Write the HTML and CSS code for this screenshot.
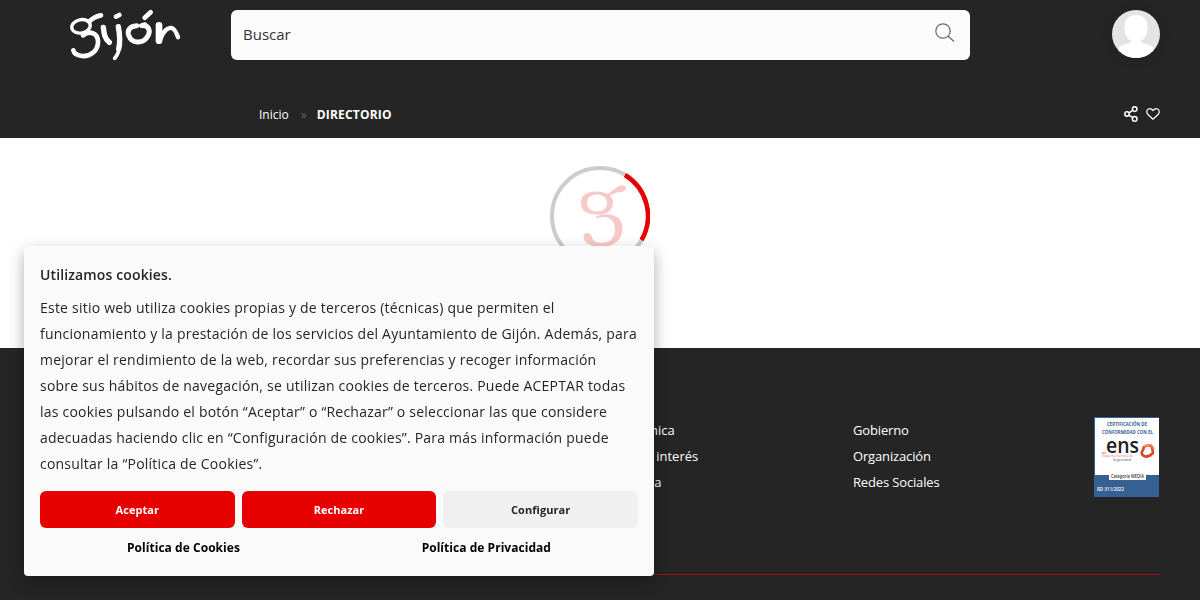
FILE: index.html
```html
<!DOCTYPE html>
<html lang="es">
<head>
<meta charset="utf-8">
<title>Directorio - Gijón</title>
<link rel="stylesheet" href="styles.css">
</head>
<body>
<header class="header">
  <div class="topbar">
    <a class="logo" href="#" aria-label="Gijón">
      <svg width="130" height="70" viewBox="0 0 390 210" fill="none" stroke="#fff" stroke-linecap="round" stroke-linejoin="round">
        <ellipse cx="63" cy="79" rx="28" ry="20" stroke-width="10" transform="rotate(-12 63 79)"/>
        <path d="M88 64Q104 49 123 46" stroke-width="14"/>
        <path d="M69 106C88 91 113 98 114 124C115 152 91 170 65 168C48 166 42 160 40 151" stroke-width="14"/>
        <path d="M130 82C132 101 134 116 148 127" stroke-width="16"/>
        <path d="M168 50L178 45" stroke-width="14"/>
        <path d="M176 78C183 118 182 155 164 175" stroke-width="11"/>
        <path d="M175 80C181 112 179 135 176 147" stroke-width="16"/>
        <path d="M230 77C208 78 200 93 207 108C215 131 248 131 261 112C274 94 267 75 246 77" stroke-width="15"/>
        <path d="M242 76Q252 69 257 71L237 77" stroke-width="8"/>
        <path d="M254 53L272 37" stroke-width="14"/>
        <path d="M297 76L297 122" stroke-width="20"/>
        <path d="M301 118C310 92 324 82 335 84C346 87 350 101 354 112" stroke-width="13"/>
      </svg>
    </a>
    <form class="search">
      <span>Buscar</span>
      <svg width="20" height="20" viewBox="0 0 20 20" fill="none" stroke="#666" stroke-width="1.2"><circle cx="8" cy="8" r="7.2"/><path d="M13.2 13.2L19 18.5"/></svg>
    </form>
    <svg class="avatar" width="48" height="48" viewBox="0 0 48 48">
      <path d="M24 5C16 5 12 11 12.5 18C13 25 15 29 19 31C19 33 17 33.5 14 33.5C9 35 6 38 4 42V48H44V42C42 38 39 35 34 33.5C31 33.5 29 33 29 31C33 29 35 25 35.5 18C36 11 32 5 24 5Z" fill="#fff"/>
    </svg>
  </div>
  <div class="crumbbar">
    <nav class="crumbs"><a href="#">Inicio</a><span class="sep">»</span><strong>DIRECTORIO</strong></nav>
    <div class="actions">
      <svg width="14" height="16" viewBox="0 0 14 16" fill="none" stroke="#fff" stroke-width="1.5"><circle cx="3" cy="8" r="2.2"/><circle cx="10.7" cy="3.1" r="2.3"/><circle cx="10.7" cy="12.9" r="2.3"/><path d="M5 6.8L8.7 4.3M5 9.2L8.7 11.7"/></svg>
      <svg width="14" height="12" viewBox="0 0 14 12" fill="none" stroke="#fff" stroke-width="1.2" stroke-linejoin="round"><path d="M7 11.2L1.7 6.2C.1 4.4 .6 1.9 2.4 1C4.1.2 5.7.9 7 2.5C8.3.9 9.9.2 11.6 1C13.4 1.9 13.9 4.4 12.3 6.2Z"/></svg>
    </div>
  </div>
</header>

<main class="main">
  <svg width="100" height="100" viewBox="0 0 100 100" fill="none">
    <circle cx="50" cy="50" r="48" stroke="#ccc" stroke-width="4"/>
    <path d="M75 9A48 48 0 0 1 91.5 74" stroke="#e60000" stroke-width="4.5"/>
    <g fill="#f8c9c9">
      <path fill-rule="evenodd" d="M31 37C31 29 37 25.5 46 25.5C51 25.5 55 26.5 58 28C62 25 65 22 69 20C73 18 77 20 76 23C75 26 71 26 67 26.5L60 29.5C62 31.5 63 34 63 37C63 45 56 48.500 47 48.500C37 48.500 31 45 31 37ZM37 37C37 42 41 45.500 47 45.500C53 45.500 57 42 57 37C57 32 53 28.500 47 28.500C41 28.500 37 32 37 37Z"/>
      <path d="M45.500 51C52 47 62 48 67 51C71 53.500 72.500 58 72.500 63C72.500 74 64 81 50 81C40 81 33 76 33.500 70C34 66 39 66 41 69C43 73 43 77 51 77C61 77 65 71 65 63C65 55 60 51 53 51C50 51 49 52 46 52Z"/>
    </g>
  </svg>
</main>

<footer class="footer">
  <div class="footer-grid">
    <ul class="links services">
      <li>Sede electrónica</li>
      <li>Teléfonos de interés</li>
      <li>Transparencia</li>
    </ul>
    <ul class="links">
      <li>Gobierno</li>
      <li>Organización</li>
      <li>Redes Sociales</li>
    </ul>
    <svg class="seal" width="66" height="80" viewBox="0 0 66 80">
      <rect width="65" height="80" fill="#376092"/>
      <rect x="1" y="1" width="64" height="57" fill="#fff"/>
      <rect x="15" y="55" width="37" height="8" fill="#fff"/>
      <g fill="#376092" font-weight="700" font-size="4.9">
        <text x="13" y="9" textLength="40" lengthAdjust="spacingAndGlyphs">CERTIFICACIÓN DE</text>
        <text x="8" y="16.8" textLength="51" lengthAdjust="spacingAndGlyphs">CONFORMIDAD CON EL</text>
      </g>
      <text x="12" y="36" font-size="22" font-weight="600" fill="#222" textLength="33" lengthAdjust="spacingAndGlyphs">ens</text>
      <path d="M50 30Q55 27 58 30L59 36Q54 41 50 39Q46 37 49 33Z" fill="none" stroke="#d9482b" stroke-width="2.6" stroke-linejoin="round"/>
      <path d="M50 29L57 28L60 32" fill="none" stroke="#ed8c55" stroke-width="2"/>
      <path d="M8 36H12" stroke="#d9482b" stroke-width=".8"/>
      <text x="8" y="39.8" font-size="3" fill="#d9786b" textLength="31" lengthAdjust="spacingAndGlyphs">Esquema Nacional de</text>
      <text x="19" y="44.3" font-size="4" fill="#555" textLength="18" lengthAdjust="spacingAndGlyphs">Seguridad</text>
      <text x="17" y="61" font-size="4.8" font-weight="600" fill="#333" textLength="33" lengthAdjust="spacingAndGlyphs">Categoría MEDIA</text>
      <text x="3" y="74" font-size="5" font-weight="600" fill="#fff" textLength="27" lengthAdjust="spacingAndGlyphs">RD 311/2022</text>
    </svg>
  </div>
</footer>

<section class="cookies">
  <h2>Utilizamos cookies.</h2>
  <p>Este sitio web utiliza cookies propias y de terceros (técnicas) que permiten el funcionamiento y la prestación de los servicios del Ayuntamiento de Gijón. Además, para mejorar el rendimiento de la web, recordar sus preferencias y recoger información<br>sobre sus hábitos de navegación, se utilizan cookies de terceros. Puede ACEPTAR todas las cookies pulsando el botón “Aceptar” o “Rechazar” o seleccionar las que considere adecuadas haciendo clic en “Configuración de cookies”. Para más información puede consultar la “Política de Cookies”.</p>
  <div class="buttons">
    <button>Aceptar</button>
    <button>Rechazar</button>
    <button class="secondary">Configurar</button>
  </div>
  <div class="policies"><a href="#">Política de Cookies</a><a href="#">Política de Privacidad</a></div>
</section>
</body>
</html>
```
FILE: styles.css
```css
* { box-sizing: border-box; }
body { margin: 0; height: 600px; overflow: hidden; background: #fff; font-family: "Open Sans", sans-serif; color: #252525; }
a { color: inherit; text-decoration: none; }
svg { display: block; flex: none; }

.header { height: 138px; background: #252525; color: #fff; }
.topbar { display: flex; align-items: flex-start; height: 70px; padding: 0 40px 0 60px; }
.logo { width: 171px; }
.search { display: flex; justify-content: space-between; width: 739px; height: 50px; margin: 10px auto 0 0; padding: 11px 15px 0 12px; border-radius: 6px; background: #fcfcfc; color: #333; font-size: 15px; line-height: 26px; }
.search svg { margin-top: 2px; }
.avatar { margin-top: 10px; border-radius: 50%; background: #e4e4e4; box-shadow: 0 0 12px rgba(0, 0, 0, .15); }
.crumbbar { display: flex; justify-content: space-between; align-items: center; height: 24px; margin: 32px 40px 0 259px; font-size: 12px; line-height: 24px; }
.crumbs { display: flex; padding-top: 2px; }
.crumbs strong { letter-spacing: .2px; }
.sep { margin: 0 10px 0 12px; color: #666; }
.actions { display: flex; align-items: center; gap: 8px; }

.main { display: flex; justify-content: center; height: 210px; padding-top: 28px; }

.footer { height: 252px; padding: 69px 40px 0; background: #252525; color: #fff; }
.footer-grid { display: grid; grid-template-columns: 281px 1fr 66px; height: 158px; padding-left: 532px; border-bottom: 1px solid #a30d12; }
.links { margin: 0; padding: 0; list-style: none; font-size: 13px; line-height: 26px; letter-spacing: -.15px; }
.services { padding-left: 3px; letter-spacing: 0; }

.cookies { position: fixed; left: 24px; bottom: 24px; width: 630px; height: 330px; padding: 16px; border-radius: 4px; background: #fafafa; box-shadow: 0 6px 16px rgba(0, 0, 0, .32); }
.cookies h2 { margin: 0 0 7px; font-size: 14px; font-weight: 600; line-height: 26px; letter-spacing: .13px; }
.cookies p { margin: 0 -4px 14px 0; font-size: 14px; line-height: 26px; letter-spacing: .22px; }
.buttons { display: grid; grid-template-columns: repeat(3, 1fr); gap: 7px; }
.buttons button { height: 37px; padding: 0; border: 0; border-radius: 6px; background: #e60000; color: #fff; font: 700 11px "Open Sans", sans-serif; letter-spacing: .05px; }
.buttons .secondary { background: #f0f0f0; color: #252525; }
.policies { display: flex; justify-content: space-between; padding: 0 87px; margin-top: 7px; font-size: 12px; font-weight: 700; line-height: 26px; letter-spacing: .04px; color: #000; }
```
